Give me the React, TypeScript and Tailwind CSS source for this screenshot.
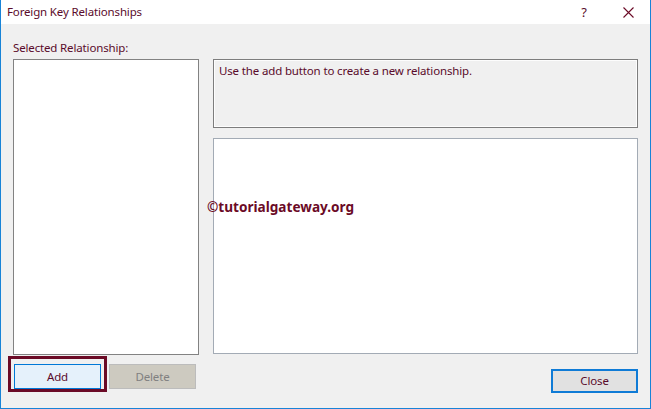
export default function App() {
  return (
    <div className="w-[651px] h-[409px] flex flex-col border-x border-b border-[#1883d7] bg-white font-['Noto_Sans',sans-serif] text-[11.5px] tracking-[-0.15px] text-[#5a0b2b] overflow-hidden">
      <div className="h-[24px] flex items-center bg-white shrink-0">
        <span className="pl-[6px] leading-[16px]">Foreign Key Relationships</span>
        <span className="ml-auto w-[20px] text-center text-[13px] leading-[16px]">?</span>
        <span className="ml-[27px] mr-[15px] w-[14px] h-[14px] flex items-center justify-center">
          <svg width="11" height="11" viewBox="0 0 11 11">
            <path d="M0.5 0.5 L10.5 10.5 M10.5 0.5 L0.5 10.5" stroke="#6b0a26" strokeWidth="1.1" fill="none" />
          </svg>
        </span>
      </div>

      <div className="relative flex-1 bg-[#f0f0f0] flex flex-col pl-[12px] pt-[16px]">
        <div className="leading-[16px] mb-[3px]">Selected Relationship:</div>

        <div className="flex gap-[14px]">
          <div className="w-[186px] h-[296px] border border-[#828282] bg-white" />
          <div className="flex flex-col gap-[10px]">
            <div className="w-[425px] h-[69px] border border-[#7d7d7d] shadow-[inset_0_0_0_1px_#fdfdfd] bg-[#f0f0f0] px-[5px] py-[3px] leading-[16px]">
              Use the add button to create a new relationship.
            </div>
            <div className="w-[425px] h-[216px] border border-[#a3abb5] bg-white" />
          </div>
        </div>

        <div className="flex items-start">
          <div className="ml-[-5px] mt-[1px] border-[3px] border-[#6b0a26] pl-[3px] pr-[3px] pt-[5px] pb-[0px]">
            <div className="w-[87px] h-[25px] border border-[#0078d7] bg-[#e5f1fb] flex items-center justify-center">
              Add
            </div>
          </div>
          <div className="ml-[2px] mt-[9px] w-[87px] h-[25px] border border-[#bcbcbc] bg-[#cdcac0] text-[#808080] flex items-center justify-center">
            Delete
          </div>
          <div className="ml-auto mr-[12px] mt-[14px] w-[87px] h-[24px] border-2 border-[#0f7bd6] bg-[#e1e1e1] flex items-center justify-center">
            Close
          </div>
        </div>

        <div className="absolute left-[206px] top-[174px] text-[13.6px] tracking-normal font-bold text-[#6b0a26] leading-[18px]">
          ©tutorialgateway.org
        </div>
      </div>
    </div>
  );
}
